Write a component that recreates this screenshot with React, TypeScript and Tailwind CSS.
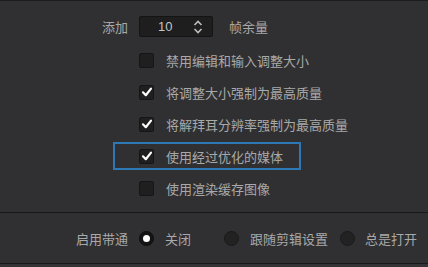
import React from "react";

const font = { fontFamily: '"Noto Sans CJK SC", "Noto Sans", sans-serif' };

function Check() {
  return (
    <svg width="12" height="12" viewBox="0 0 12 12" className="block">
      <path d="M2 6.3 L4.8 9.2 L10 2.6" fill="none" stroke="#ffffff" strokeWidth="2.2" strokeLinecap="round" strokeLinejoin="round" />
    </svg>
  );
}

function Box({ checked }: { checked?: boolean }) {
  return (
    <div className="w-[15px] h-[15px] shrink-0 rounded-[2px] bg-[#1f1f1f] border border-[#151515] flex items-center justify-center">
      {checked && <Check />}
    </div>
  );
}

function CheckRow({ label, checked }: { label: string; checked?: boolean }) {
  return (
    <div className="h-[32px] flex items-center pl-[139px] gap-[12px]">
      <Box checked={checked} />
      <span className="text-[13px] text-[#a9a9a9] leading-none">{label}</span>
    </div>
  );
}

function Radio({ on }: { on?: boolean }) {
  return (
    <div
      className={
        "w-[15px] h-[15px] shrink-0 rounded-full flex items-center justify-center " +
        (on ? "bg-[#141414] border border-[#0e0e0e]" : "bg-[#222223] border border-[#1a1a1a]")
      }
    >
      {on && <div className="w-[7px] h-[7px] rounded-full bg-white" />}
    </div>
  );
}

export default function App() {
  return (
    <div className="w-[428px] h-[267px] bg-[#303032] flex flex-col overflow-hidden" style={font}>
      <div className="h-[1px] bg-[#1c1c1c]" />
      <div className="h-[15px]" />
      <div className="h-[21px] flex items-center">
        <div className="w-[128px] text-right text-[13px] text-[#a9a9a9] leading-none">添加</div>
        <div className="ml-[11px] w-[74px] h-[21px] rounded-[2px] bg-[#1e1e1f] border border-[#141414] flex items-center">
          <span className="ml-[18px] text-[13px] text-[#c4c4c4] leading-none" style={{ fontFamily: '"Liberation Sans", sans-serif' }}>10</span>
          <svg width="10" height="14" viewBox="0 0 10 14" className="ml-auto mr-[9px]">
            <path d="M1.5 5 L5 1.5 L8.5 5" fill="none" stroke="#bdbdbd" strokeWidth="1.6" />
            <path d="M1.5 9 L5 12.5 L8.5 9" fill="none" stroke="#bdbdbd" strokeWidth="1.6" />
          </svg>
        </div>
        <span className="ml-[16px] text-[13px] text-[#a9a9a9] leading-none">帧余量</span>
      </div>
      <div className="h-[7px]" />
      <CheckRow label="禁用编辑和输入调整大小" />
      <CheckRow label="将调整大小强制为最高质量" checked />
      <CheckRow label="将解拜耳分辨率强制为最高质量" checked />
      <div className="h-[32px] flex items-center">
        <div className="ml-[113px] w-[188px] h-[28px] border-2 border-[#2f78b6] flex items-center pl-[24px] gap-[12px]">
          <Box checked />
          <span className="text-[13px] text-[#a9a9a9] leading-none">使用经过优化的媒体</span>
        </div>
      </div>
      <CheckRow label="使用渲染缓存图像" />
      <div className="h-[8px]" />
      <div className="h-[1px] bg-[#19191a]" />
      <div className="h-[50px] flex items-center">
        <div className="w-[128px] text-right text-[13px] text-[#a9a9a9] leading-none">启用带通</div>
        <div className="ml-[11px]"><Radio on /></div>
        <span className="ml-[11px] text-[13px] text-[#a9a9a9] leading-none">关闭</span>
        <div className="ml-[33px]"><Radio /></div>
        <span className="ml-[11px] text-[13px] text-[#a9a9a9] leading-none">跟随剪辑设置</span>
        <div className="ml-[12px]"><Radio /></div>
        <span className="ml-[10px] text-[13px] text-[#a9a9a9] leading-none">总是打开</span>
      </div>
      <div className="h-[1px] bg-[#19191a]" />
      <div className="flex-1 bg-[#343436]" />
    </div>
  );
}
